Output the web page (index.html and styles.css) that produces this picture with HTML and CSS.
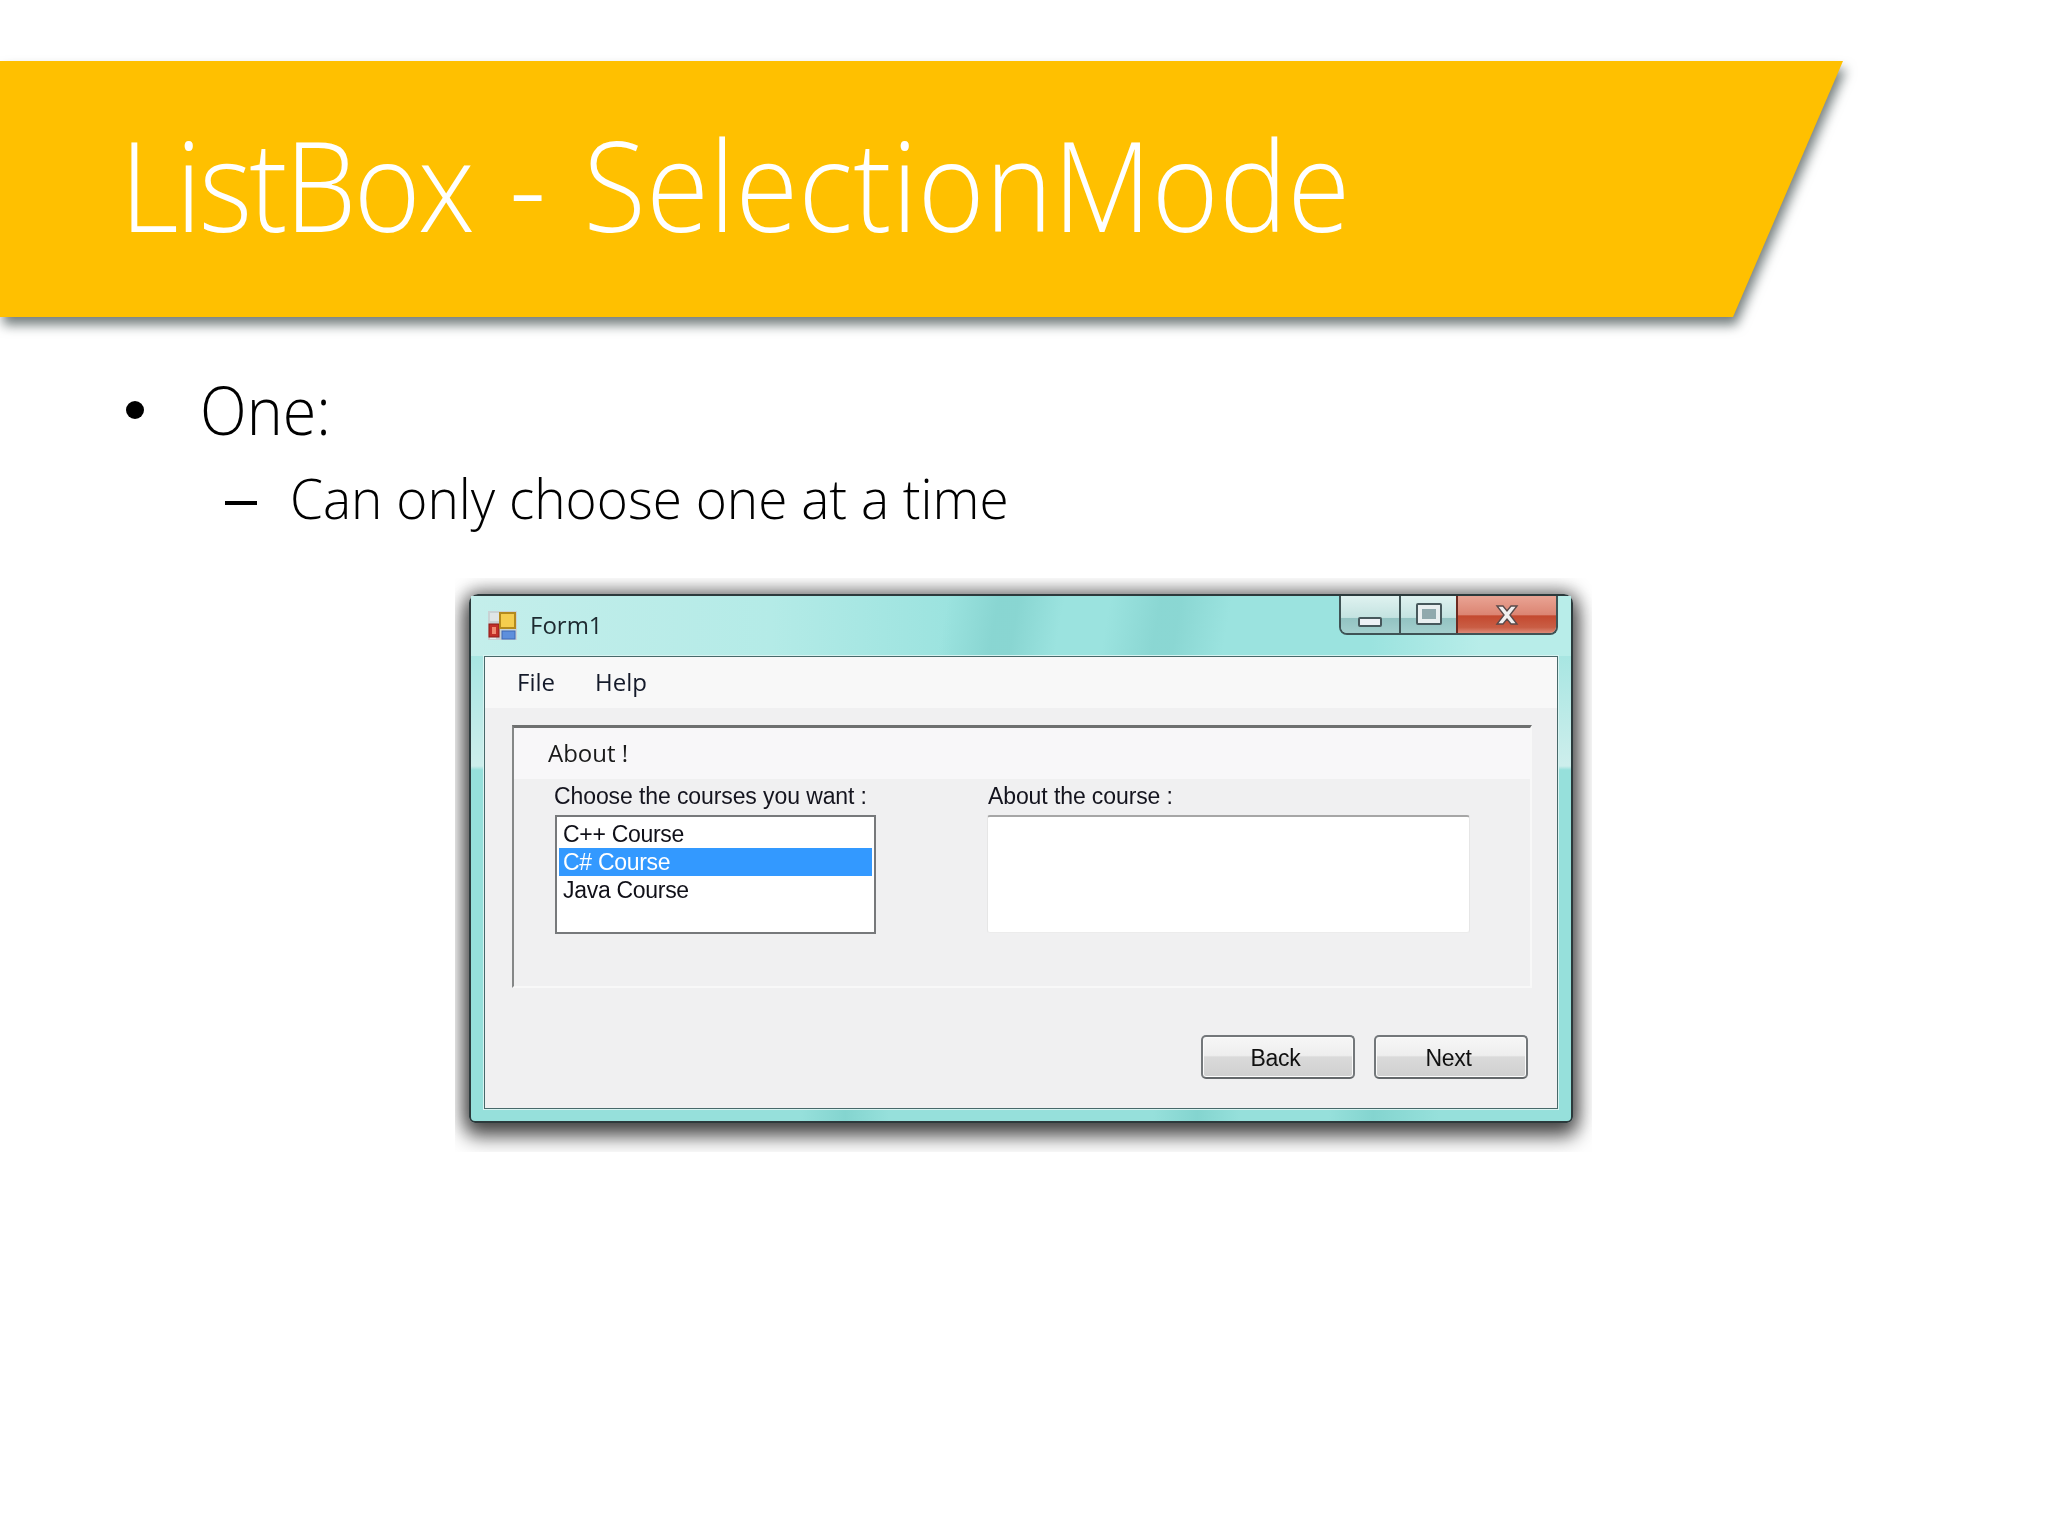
FILE: index.html
```html
<!DOCTYPE html>
<html lang="en">
<head>
<meta charset="utf-8">
<title>ListBox - SelectionMode</title>
<link rel="stylesheet" href="styles.css">
</head>
<body>
<main class="slide">
  <header class="banner-shadow">
    <div class="banner"><h1 class="title"><span class="title-word">ListBox</span> - SelectionMode</h1></div>
  </header>
  <ul class="bullets">
    <li class="bullet-row"><span class="dot"></span><span class="one">One:</span></li>
    <li class="sub-row"><span class="dash"></span><span class="sub">Can only choose one at a time</span></li>
  </ul>
  <figure class="shot">
    <div class="window">
      <div class="titlebar">
        <svg class="app-icon" viewBox="0 0 29 29" aria-hidden="true">
          <rect x="0" y="0" width="29" height="29" fill="#c9d2d4"/>
          <rect x="2" y="2" width="10" height="8" fill="#dfe5e6"/>
          <rect x="2" y="24" width="6" height="4" fill="#e9eeee"/>
          <rect x="1" y="13" width="10" height="13" fill="#c22f28" stroke="#8c1d18"/>
          <rect x="4" y="16" width="4" height="7" fill="#f08a70"/>
          <rect x="12" y="2" width="15" height="15" fill="#f5cd4e" stroke="#b48a1d" stroke-width="2"/>
          <rect x="14" y="20" width="13" height="8" fill="#5e8fdc" stroke="#3c68b6"/>
        </svg>
        <span class="caption">Form1</span>
        <div class="controls">
          <div class="ctl ctl-min"><span class="glyph-min"></span></div>
          <div class="ctl ctl-max"><span class="glyph-max"></span></div>
          <div class="ctl ctl-close">
            <svg class="glyph-x" viewBox="0 0 24 20" aria-hidden="true">
              <path d="M2 1h6l4 5 4-5h6l-7 9 7 9h-6l-4-5-4 5H2l7-9z" fill="#f0f0f0" stroke="#5a4a4a" stroke-width="1.4"/>
            </svg>
          </div>
        </div>
      </div>
      <div class="client">
        <nav class="menu"><span class="menu-item">File</span><span class="menu-item">Help</span></nav>
        <section class="group">
          <div class="group-head">About !</div>
          <div class="group-body">
            <div class="col col-list">
              <div class="label">Choose the courses you want :</div>
              <div class="listbox">
                <div class="item">C++ Course</div>
                <div class="item item-selected">C# Course</div>
                <div class="item">Java Course</div>
              </div>
            </div>
            <div class="col col-text">
              <div class="label">About the course :</div>
              <div class="textbox"></div>
            </div>
          </div>
        </section>
        <div class="actions">
          <button class="btn" type="button">Back</button>
          <button class="btn" type="button">Next</button>
        </div>
      </div>
    </div>
  </figure>
</main>
</body>
</html>
```
FILE: styles.css
```css
* { box-sizing: border-box; }
html, body { margin: 0; padding: 0; background: #fff; }
.slide { width: 2048px; height: 1536px; overflow: hidden; background: #fff; padding-top: 61px; }

.banner-shadow { filter: drop-shadow(3px 8px 6px rgba(50, 65, 65, .68)); }
.banner { height: 256px; background: #ffc000; clip-path: polygon(0 0, 1843px 0, 1733px 100%, 0 100%); padding-left: 120px; }
.title { margin: 0; font: 300 126px/244px "Open Sans", sans-serif; color: #fff; white-space: nowrap; letter-spacing: .4px; word-spacing: 8px; transform: scaleX(.906); transform-origin: 0 0; }
.title-word { letter-spacing: -3px; }

.bullets { list-style: none; margin: 0; padding: 48px 0 0 0; height: 261px; }
.bullet-row { display: flex; align-items: center; height: 88px; padding-left: 126px; }
.dot { width: 18px; height: 18px; margin-top: 2px; border-radius: 50%; background: #000; margin-right: 56px; }
.one { font: 300 66px/88px "Open Sans", sans-serif; color: #000; display: inline-block; transform: scaleX(.925); transform-origin: 0 0; }
.sub-row { display: flex; align-items: center; height: 88px; margin-top: 1px; padding-left: 225px; }
.dash { width: 32px; height: 4px; margin-top: 10px; background: #000; margin-right: 33px; }
.sub { font: 300 55px/88px "Open Sans", sans-serif; color: #000; white-space: nowrap; display: inline-block; transform: scaleX(.966); transform-origin: 0 0; }

.shot { margin: 0 0 0 455px; width: 1137px; height: 574px; overflow: hidden; padding: 16px 0 0 14px; }
.window {
  width: 1104px; height: 529px; padding: 0 13px 12px;
  border: 2px solid #2c3a3c; border-radius: 9px 9px 6px 6px;
  background:
    linear-gradient(90deg, transparent 0 30%, rgba(120,205,200,.6) 34%, transparent 38% 62%, rgba(120,205,200,.6) 66%, transparent 70% 78%, rgba(120,205,200,.6) 82%, transparent 88%),
    linear-gradient(180deg, #b6ebe7 0, #a8e6e2 60px, #cdeeec 170px, #96e0db 174px, #96e0db 100%);
  box-shadow: 0 10px 20px 4px rgba(0, 0, 0, .6), 0 0 18px 4px rgba(0, 0, 0, .42);
  display: flex; flex-direction: column;
  filter: blur(.5px);
}
.titlebar {
  height: 60px; flex: none; display: flex; align-items: flex-start; margin: 0 -13px; padding: 0 13px 0 16px;
  background:
    linear-gradient(100deg, transparent 0 470px, rgba(125,205,201,.6) 520px 540px, transparent 585px 630px, rgba(125,205,201,.55) 680px 700px, transparent 750px),
    linear-gradient(90deg, #c4eeeb 0, #b4ebe7 300px, #9be3df 480px, #9be3df 900px, #b8ede9 1010px, #b8ede9 100%);
}
.app-icon { width: 29px; height: 29px; margin: 15px 13px 0 1px; flex: none; }
.caption { font: 400 24px/58px "Open Sans", sans-serif; color: #1d2a30; }
.controls { margin-left: auto; display: flex; height: 39px; border: 2px solid #3f5355; border-top: 0; border-radius: 0 0 8px 8px; overflow: hidden; }
.ctl { display: flex; align-items: center; justify-content: center; height: 100%; }
.ctl-min { width: 60px; border-right: 2px solid #3f5355; background: linear-gradient(180deg, #dff2f0 0, #c4e3e1 58%, #93c3c2 60%, #a3cfcd 100%); padding: 14px 0 0 0; }
.ctl-max { width: 57px; border-right: 2px solid #6c2a20; background: linear-gradient(180deg, #dff2f0 0, #c4e3e1 58%, #93c3c2 60%, #a3cfcd 100%); padding: 0 0 2px 0; }
.ctl-close { width: 98px; background: linear-gradient(180deg, #e9a494 0, #dc8573 50%, #c4492f 54%, #c95e45 85%, #dd8a78 100%); padding: 0; }
.glyph-min { width: 24px; height: 10px; background: #eef1f6; border: 2px solid #47585c; border-radius: 2px; }
.glyph-max { width: 24px; height: 20px; background: #90a9ad; border: 5px solid #e9eff0; outline: 2px solid #47585c; outline-offset: -1px; border-radius: 1px; }
.glyph-x { width: 24px; height: 20px; }

.client { flex: 1; background: #f0f0f1; border: 1px solid #48696a; outline: 1px solid #d8f4f2; display: flex; flex-direction: column; }
.menu { height: 51px; flex: none; background: #f8f8f8; display: flex; align-items: center; padding: 0 0 2px 32px; gap: 40px; }
.menu-item { font: 400 24px/30px "Open Sans", sans-serif; color: #141a2a; }
.group { margin: 17px 25px 0 27px; height: 263px; flex: none; border-top: 3px solid #6e7070; border-left: 2px solid #858787; border-right: 2px solid #f8f8f8; border-bottom: 2px solid #f8f8f8; }
.group-head { height: 51px; background: #f8f7f9; padding-left: 34px; font: 400 24px/49px "Open Sans", sans-serif; color: #1a1a1a; }
.group-body { display: flex; }
.col { display: flex; flex-direction: column; }
.col-list { margin-left: 41px; width: 321px; }
.col-text { margin-left: 111px; width: 483px; }
.label { height: 36px; margin-left: -1px; font: 400 23px/34px "Liberation Sans", sans-serif; letter-spacing: -.1px; color: #14141e; white-space: nowrap; }
.col-text .label { margin-left: 1px; }
.listbox { height: 119px; background: #fff; border: 2px solid #77797b; padding: 3px 2px; }
.item { height: 28px; padding-left: 4px; font: 400 23px/28px "Liberation Sans", sans-serif; letter-spacing: -.3px; color: #101018; }
.item-selected { background: #3399ff; color: #fff; }
.textbox { height: 118px; background: #fff; border-top: 2px solid #a6a6a6; border-left: 1px solid #e6e6e6; border-right: 1px solid #e6e6e6; border-bottom: 1px solid #ececec; border-radius: 3px; }
.actions { margin-top: 47px; padding-right: 29px; display: flex; justify-content: flex-end; gap: 19px; }
.btn { width: 154px; height: 44px; padding: 2px 5px 0 0; border: 2px solid #73777a; border-bottom-color: #63676a; border-radius: 5px; background: linear-gradient(180deg, #f6f6f6 0, #eeeeee 46%, #dadada 50%, #cfcfcf 100%); box-shadow: inset 0 0 0 1px #fbfbfb; font: 400 23px/36px "Liberation Sans", sans-serif; letter-spacing: -.3px; color: #101010; }
```
